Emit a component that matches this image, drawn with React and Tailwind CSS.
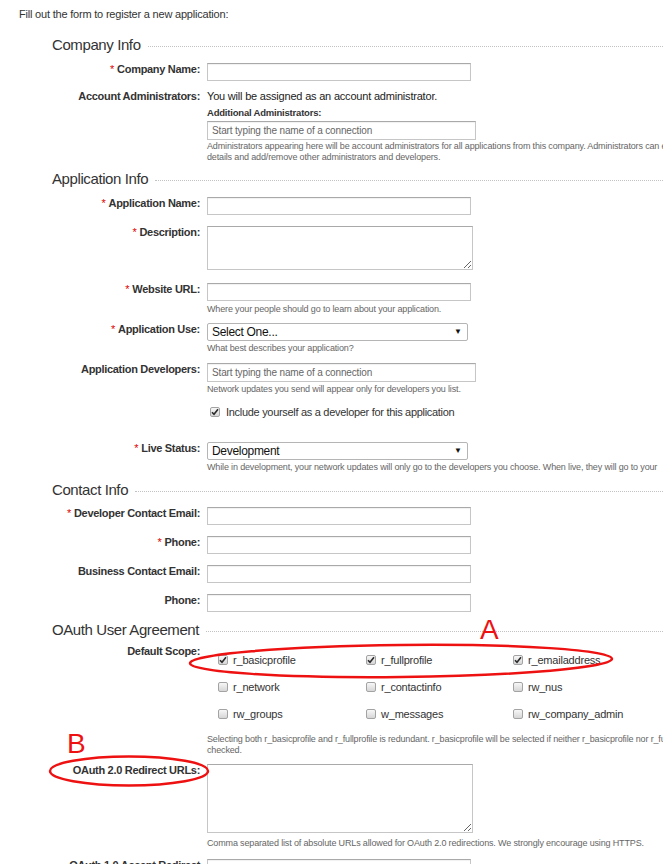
import React from 'react'

// Scopes shown in the OAuth section, row by row.
const scopes = [
  ['r_basicprofile', true],
  ['r_fullprofile', true],
  ['r_emailaddress', true],
  ['r_network', false],
  ['r_contactinfo', false],
  ['rw_nus', false],
  ['rw_groups', false],
  ['w_messages', false],
  ['rw_company_admin', false],
]

const Heading = ({ title, className }) => (
  <div className={`flex items-end pl-[52px] h-[18px] ${className}`}>
    <span className="text-[15px] leading-[18px] tracking-[-0.4px] text-[#333] whitespace-nowrap">
      {title}
    </span>
    <span className="flex-1 ml-[7px] mb-[7px] border-t border-dotted border-[#c2c2c2]" />
  </div>
)

const Field = ({ label, req, className, children }) => (
  <div className={`grid grid-cols-[200px_1fr] gap-x-[7px] ${className}`}>
    <div className="text-right font-bold text-[11px] leading-[13px] tracking-[-0.3px] text-[#333] whitespace-nowrap">
      {req && <span className="text-[#d00] font-normal mr-[3px]">*</span>}
      {label}
    </div>
    <div>{children}</div>
  </div>
)

const TextBox = ({ w = 'w-[264px]', h = 'h-[18px]', placeholder }) => (
  <div
    className={`${w} ${h} border border-[#c6c6c6] border-t-[#a9a9a9] bg-white shadow-[inset_0_1px_1px_rgba(0,0,0,0.06)] pl-[4px] flex items-center`}
  >
    {placeholder && (
      <span className="text-[10px] tracking-[-0.15px] text-[#666] whitespace-nowrap">
        {placeholder}
      </span>
    )}
  </div>
)

const Area = ({ h }) => (
  <textarea
    readOnly
    className={`block w-[266px] ${h} border border-[#c6c6c6] border-t-[#a9a9a9] bg-white`}
  />
)

const Select = ({ value }) => (
  <div className="w-[261px] h-[18px] border border-[#b5b5b5] rounded-[2px] bg-white flex items-center justify-between pl-[4px] pr-[5px]">
    <span className="text-[12px] tracking-[-0.3px] text-[#111] leading-[14px]">{value}</span>
    <span className="text-[8px] text-[#111]">▼</span>
  </div>
)

const Help = ({ children, className }) => (
  <div
    className={`text-[9px] leading-[11px] tracking-[-0.15px] text-[#666] whitespace-nowrap ${className}`}
  >
    {children}
  </div>
)

const Check = ({ on }) => (
  <span className="w-[10px] h-[10px] shrink-0 border border-[#a3a3a3] rounded-[2px] bg-gradient-to-b from-[#f7f7f7] to-[#d6d6d6] flex items-center justify-center">
    {on && (
      <svg width="8" height="8" viewBox="0 0 8 8">
        <path
          d="M1 4.2 L3 6.3 L7 1.2"
          fill="none"
          stroke="#2a2a2a"
          strokeWidth="1.6"
        />
      </svg>
    )}
  </span>
)

export default function App() {
  return (
    <div className="relative w-[663px] h-[864px] overflow-hidden bg-white text-[#333] font-['Liberation_Sans',Arial,sans-serif]">
      <p className="pl-[19px] pt-[8px] text-[11px] leading-[13px] tracking-[-0.2px]">
        Fill out the form to register a new application:
      </p>

      <Heading title="Company Info" className="mt-[15px]" />
      <Field label="Company Name:" req className="mt-[9px]">
        <TextBox />
      </Field>
      <Field label="Account Administrators:" className="mt-[9px]">
        <div className="text-[11px] leading-[13px] tracking-[-0.2px] text-[#222]">
          You will be assigned as an account administrator.
        </div>
        <div className="mt-[4px] text-[9.5px] leading-[12px] font-bold tracking-[-0.2px] text-[#333]">
          Additional Administrators:
        </div>
        <div className="mt-[2px]">
          <TextBox w="w-[269px]" h="h-[19px]" placeholder="Start typing the name of a connection" />
        </div>
        <Help className="mt-[1px]">
          Administrators appearing here will be account administrators for all
          applications from this company. Administrators can edit
        </Help>
        <Help>details and add/remove other administrators and developers.</Help>
      </Field>

      <Heading title="Application Info" className="mt-[7px]" />
      <Field label="Application Name:" req className="mt-[9px]">
        <TextBox />
      </Field>
      <Field label="Description:" req className="mt-[11px]">
        <Area h="h-[44px]" />
      </Field>
      <Field label="Website URL:" req className="mt-[13px]">
        <TextBox />
        <Help className="mt-[3px]">
          Where your people should go to learn about your application.
        </Help>
      </Field>
      <Field label="Application Use:" req className="mt-[8px]">
        <Select value="Select One..." />
        <Help className="mt-[2px]">What best describes your application?</Help>
      </Field>
      <Field label="Application Developers:" className="mt-[9px]">
        <TextBox w="w-[269px]" h="h-[19px]" placeholder="Start typing the name of a connection" />
        <Help className="mt-[2px]">
          Network updates you send will appear only for developers you list.
        </Help>
        <div className="mt-[10px] pl-[3px] flex items-center gap-[6px] text-[11px] leading-[14px] tracking-[-0.3px] text-[#333]">
          <Check on />
          <span>Include yourself as a developer for this application</span>
        </div>
      </Field>
      <Field label="Live Status:" req className="mt-[23px]">
        <Select value="Development" />
        <Help className="mt-[2px]">
          While in development, your network updates will only go to the
          developers you choose. When live, they will go to your
        </Help>
      </Field>

      <Heading title="Contact Info" className="mt-[8px]" />
      <Field label="Developer Contact Email:" req className="mt-[8px]">
        <TextBox />
      </Field>
      <Field label="Phone:" req className="mt-[11px]">
        <TextBox />
      </Field>
      <Field label="Business Contact Email:" className="mt-[11px]">
        <TextBox />
      </Field>
      <Field label="Phone:" className="mt-[11px]">
        <TextBox />
      </Field>

      <Heading title="OAuth User Agreement" className="mt-[9px]" />
      <Field label="Default Scope:" className="mt-[6px]">
        <div className="pt-[8px] pl-[11px] grid grid-cols-[148px_147px_auto] gap-y-[13px]">
          {scopes.map(([name, on]) => (
            <div
              key={name}
              className="flex items-center gap-[5px] text-[11px] leading-[14px] tracking-[-0.2px] text-[#333] whitespace-nowrap"
            >
              <Check on={on} />
              <span>{name}</span>
            </div>
          ))}
        </div>
        <Help className="mt-[13px] leading-[10px]">
          Selecting both r_basicprofile and r_fullprofile is redundant.
          r_basicprofile will be selected if neither r_basicprofile nor
          r_fullprofile is
        </Help>
        <Help className="leading-[10px]">checked.</Help>
      </Field>
      <Field label="OAuth 2.0 Redirect URLs:" className="mt-[8px]">
        <Area h="h-[69px]" />
        <Help className="mt-[5px]">
          Comma separated list of absolute URLs allowed for OAuth 2.0
          redirections. We strongly encourage using HTTPS.
        </Help>
      </Field>
      <Field label="OAuth 1.0 Accept Redirect" className="mt-[10px]">
        <TextBox />
      </Field>

      {/* red hand-drawn annotations over the form */}
      <svg
        className="absolute left-0 top-0 pointer-events-none"
        width="663"
        height="864"
      >
        <ellipse cx="401" cy="661" rx="211" ry="16" fill="none" stroke="#ee1111" strokeWidth="2.5" transform="rotate(-0.6 401 661)" />
        <ellipse cx="129" cy="771" rx="79" ry="14.5" fill="none" stroke="#ee1111" strokeWidth="2.5" />
      </svg>
      <span className="absolute left-[480px] top-[614px] text-[28px] leading-[32px] text-[#ee1111]">
        A
      </span>
      <span className="absolute left-[67px] top-[728px] text-[28px] leading-[32px] text-[#ee1111]">
        B
      </span>
    </div>
  )
}
